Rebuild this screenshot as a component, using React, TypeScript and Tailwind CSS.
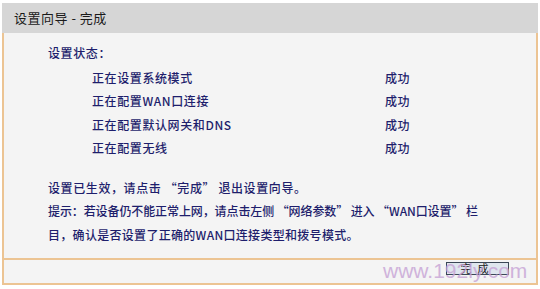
import React from 'react';

const items = ['正在设置系统模式', '正在配置WAN口连接', '正在配置默认网关和DNS', '正在配置无线'];

export default function App() {
  return (
    <div
      className="relative w-[540px] h-[289px] bg-white pt-[3px] px-[2px]"
      style={{ fontFamily: '"Noto Sans CJK SC", "Noto Sans", sans-serif' }}
    >
      {/* title bar */}
      <div className="h-[30px] bg-[#d6d6d6] flex items-center pl-[12px] text-[13px] text-[#1a1a1a] tracking-[0.5px]">
        设置向导 - 完成
      </div>

      {/* body */}
      <div className="h-[225px] bg-[#f4f4f4] border-x-2 border-[#ecc493] pt-[8px] text-[12px] leading-[23.5px] tracking-[0.6px] text-[#1e1e6c] font-medium">
        <div className="pl-[44px]">设置状态：</div>
        <div className="mt-[1px]">
          {items.map((t) => (
            <div key={t} className="flex">
              <div className="pl-[88px] w-[381px]">{t}</div>
              <div>成功</div>
            </div>
          ))}
        </div>
        <div className="pl-[44px] mt-[16px]">设置已生效，请点击 “完成” 退出设置向导。</div>
        <div className="pl-[44px] tracking-[-0.1px] whitespace-nowrap">提示：若设备仍不能正常上网，请点击左侧 “网络参数” 进入 “WAN口设置” 栏</div>
        <div className="pl-[44px] tracking-[0.3px]">目，确认是否设置了正确的WAN口连接类型和拨号模式。</div>
      </div>

      {/* footer */}
      <div className="h-[27px] bg-[#f4f4f4] border-2 border-[#ecc493] flex items-start justify-end pr-[27px] pt-[2px]">
        <button className="w-[63px] h-[13px] bg-[#dfe6ee] border border-[#3b4756] text-[11px] leading-[11px] text-[#222] tracking-[6px] flex items-center justify-center">
          完成
        </button>
      </div>

      {/* watermark */}
      <div
        className="absolute left-[383px] top-[259px] text-[21px] leading-[24px] text-[#c7a3d6] opacity-80 pointer-events-none"
        style={{ fontFamily: '"Liberation Sans", Arial, sans-serif' }}
      >
        www.192ly.com
      </div>
    </div>
  );
}
